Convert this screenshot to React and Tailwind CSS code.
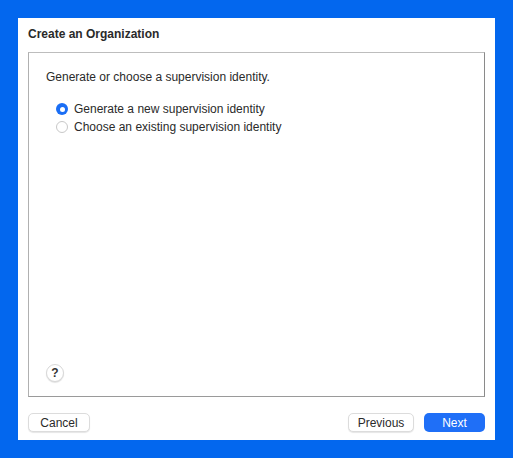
import React from "react";

const font = { fontFamily: '"Liberation Sans", Arial, sans-serif' };

const Radio = ({ checked, label }) => (
  <label className="flex items-center gap-[6px] h-[18px]">
    {checked ? (
      <span className="w-[12px] h-[12px] rounded-full bg-[#1a6ef5] flex items-center justify-center">
        <span className="w-[5px] h-[5px] rounded-full bg-white" />
      </span>
    ) : (
      <span className="w-[12px] h-[12px] rounded-full border border-[#c8c8c8] bg-white" />
    )}
    <span className="text-[12px] text-[#2a2a2a]">{label}</span>
  </label>
);

export default function App() {
  return (
    <div className="w-[513px] h-[458px] bg-[#0367ee] p-[18px]" style={font}>
      <div className="w-[477px] h-[422px] bg-white flex flex-col px-[10px]">
        <div className="h-[34px] flex items-center pb-[3px] text-[12px] font-bold text-[#2a2a2a]">
          Create an Organization
        </div>
        <div className="h-[345px] border border-t-[#bdbdbd] border-l-[#b0b0b0] border-r-[#8a8a8a] border-b-[#9a9a9a] flex flex-col px-[17px] pt-[16px] pb-[14px]">
          <div className="text-[12px] text-[#2a2a2a] h-[16px] flex items-center">
            Generate or choose a supervision identity.
          </div>
          <div className="flex flex-col mt-[15px] pl-[10px]">
            <Radio checked label="Generate a new supervision identity" />
            <Radio label="Choose an existing supervision identity" />
          </div>
          <div className="flex-1" />
          <button className="w-[18px] h-[18px] rounded-full border border-[#d8d8d8] bg-white shadow-[0_1px_1px_rgba(0,0,0,0.12)] text-[12px] font-bold text-[#333] flex items-center justify-center">
            ?
          </button>
        </div>
        <div className="flex items-center mt-[16px]">
          <button className="w-[62px] h-[19px] rounded-[5px] border border-[#dcdcdc] bg-white shadow-[0_1px_1px_rgba(0,0,0,0.1)] text-[12px] text-[#2a2a2a]">
            Cancel
          </button>
          <div className="flex-1" />
          <button className="w-[66px] h-[19px] rounded-[5px] border border-[#dcdcdc] bg-white shadow-[0_1px_1px_rgba(0,0,0,0.1)] text-[12px] text-[#2a2a2a]">
            Previous
          </button>
          <button className="ml-[10px] w-[61px] h-[19px] rounded-[5px] bg-[#1f6ff7] text-[12px] font-medium text-white">
            Next
          </button>
        </div>
      </div>
    </div>
  );
}
